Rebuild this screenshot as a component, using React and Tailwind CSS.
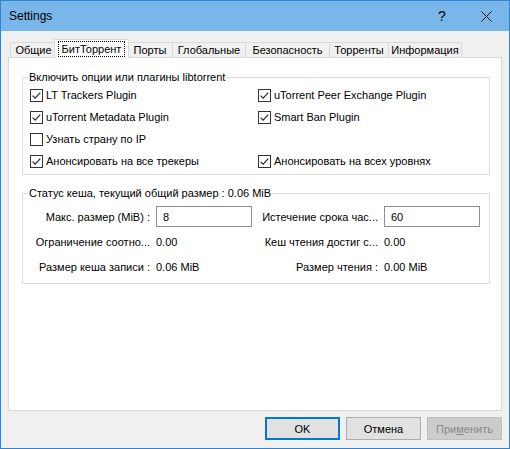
import { useState } from 'react'

const tabs = [
  { label: 'Общие', w: 'w-[46px]' },
  { label: 'БитТоррент', w: 'w-[75px]', active: true },
  { label: 'Порты', w: 'w-[45px]' },
  { label: 'Глобальные', w: 'w-[73px]' },
  { label: 'Безопасность', w: 'w-[84px]' },
  { label: 'Торренты', w: 'w-[59px]' },
  { label: 'Информация', w: 'w-[74px]', last: true },
]

const plugins = [
  ['LT Trackers Plugin', true],
  ['uTorrent Peer Exchange Plugin', true],
  ['uTorrent Metadata Plugin', true],
  ['Smart Ban Plugin', true],
  ['Узнать страну по IP', false],
  null,
  ['Анонсировать на все трекеры', true],
  ['Анонсировать на всех уровнях', true],
]

function CheckBox({ checked }) {
  return (
    <svg width="13" height="13" viewBox="0 0 13 13" className="shrink-0">
      <rect x="0.5" y="0.5" width="12" height="12" fill="#fff" stroke="#333" />
      {checked && (
        <polyline points="2.6,6.6 5.1,9.1 10.3,3.6" fill="none" stroke="#222" strokeWidth="1.1" />
      )}
    </svg>
  )
}

function Option({ label, initial }) {
  const [on, setOn] = useState(initial)
  return (
    <label className="flex items-center gap-[3px] h-[22px] cursor-default whitespace-nowrap" onClick={() => setOn(!on)}>
      <CheckBox checked={on} />
      <span>{label}</span>
    </label>
  )
}

export default function App() {
  return (
    <div
      className="w-[510px] h-[449px] flex flex-col bg-[#f0f0f0] border border-[#2f83d3] text-black text-[11px] leading-[16px]"
      style={{ fontFamily: '"Liberation Sans", Arial, sans-serif' }}
    >
      {/* title bar */}
      <div className="h-[30px] shrink-0 flex items-center bg-[#79b6ea]">
        <span className="pl-[8px] flex-1 text-[12px]">Settings</span>
        <div className="w-[42px] h-full flex items-center justify-center text-[14px]">?</div>
        <div className="w-[46px] h-full flex items-center justify-center">
          <svg width="11" height="11" viewBox="0 0 11 11">
            <path d="M0.5 0.5 L10.5 10.5 M10.5 0.5 L0.5 10.5" stroke="#111" strokeWidth="1" />
          </svg>
        </div>
      </div>

      <div className="flex-1 flex flex-col px-[7px] pt-[8px]">
        {/* tabs */}
        <div className="h-[18px] flex items-end pl-[2px]">
          {tabs.map((t) =>
            t.active ? (
              <div
                key={t.label}
                className={`${t.w} -mx-[2px] h-[19px] -mb-px relative z-10 bg-white border border-b-0 border-[#d9d9d9] flex items-start justify-center pt-[1px]`}
              >
                <span className="border border-dotted border-black px-[3px] leading-[14px]">{t.label}</span>
              </div>
            ) : (
              <div
                key={t.label}
                className={`${t.w} h-[15px] bg-[#f0f0f0] border-t border-l ${t.last ? 'border-r' : ''} border-[#d9d9d9] flex items-center justify-center leading-[14px] whitespace-nowrap`}
              >
                {t.label}
              </div>
            )
          )}
        </div>

        {/* panel */}
        <div className="h-[354px] shrink-0 bg-white border border-[#d9d9d9] pt-[12px]">
          <fieldset className="ml-[13px] w-[468px] border border-[#dcdcdc] pb-[2px]">
            <legend className="ml-[5px] px-[1px] leading-[14px]">Включить опции или плагины libtorrent</legend>
            <div className="grid grid-cols-[228px_1fr] pl-[7px]">
              {plugins.map((p, i) =>
                p ? <Option key={i} label={p[0]} initial={p[1]} /> : <div key={i} className="h-[22px]" />
              )}
            </div>
          </fieldset>

          <fieldset className="ml-[13px] mt-[11px] w-[468px] border border-[#dcdcdc] pt-[4px] pb-[4px]">
            <legend className="ml-[5px] px-[1px] leading-[14px]">Статус кеша, текущий общий размер : 0.06 MiB</legend>
            <div className="grid grid-cols-[117px_96px_120px_96px] gap-x-[6px] pl-[10px] auto-rows-[25px] items-center whitespace-nowrap">
              <span className="text-right">Макс. размер (MiB) :</span>
              <input
                defaultValue="8"
                className="h-[21px] w-[96px] border border-[#8f8f8f] px-[6px] outline-none"
              />
              <span className="text-right">Истечение срока час...</span>
              <input
                defaultValue="60"
                className="h-[21px] w-[96px] border border-[#8f8f8f] px-[6px] outline-none"
              />

              <span className="text-right">Ограничение соотно...</span>
              <span>0.00</span>
              <span className="text-right">Кеш чтения достиг с...</span>
              <span>0.00</span>

              <span className="text-right">Размер кеша записи :</span>
              <span>0.06 MiB</span>
              <span className="text-right">Размер чтения :</span>
              <span>0.00 MiB</span>
            </div>
          </fieldset>
        </div>

        {/* buttons */}
        <div className="flex justify-end gap-[6px] mt-[6px]">
          <button className="w-[75px] h-[23px] bg-[#e1e1e1] border-2 border-[#0078d7]">OK</button>
          <button className="w-[75px] h-[23px] bg-[#e1e1e1] border border-[#adadad]">Отмена</button>
          <button className="w-[75px] h-[23px] bg-[#cccccc] border border-[#bfbfbf] text-[#8a8a8a]" disabled>
            При<span className="underline">м</span>енить
          </button>
        </div>
      </div>
    </div>
  )
}
